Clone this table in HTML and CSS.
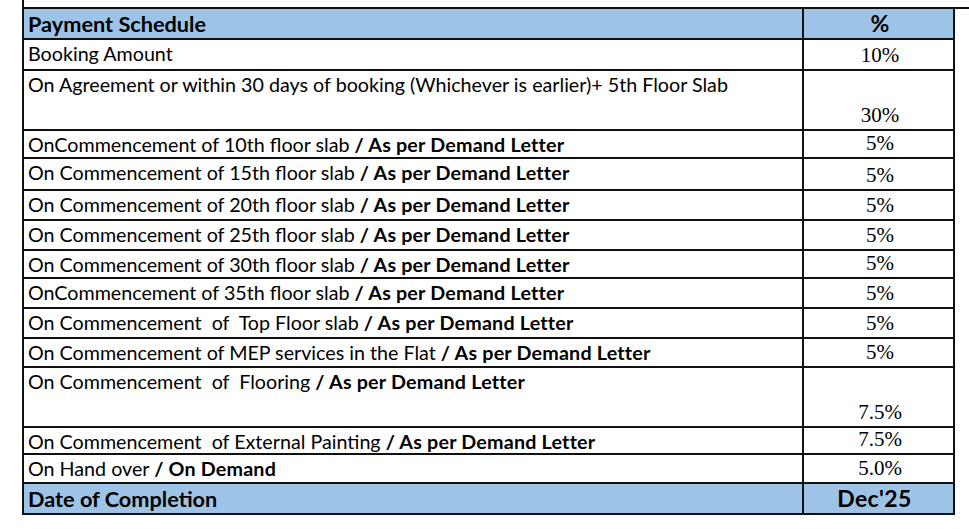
FILE: index.html
```html
<!DOCTYPE html>
<html lang="en">
<head>
<meta charset="utf-8">
<title>Payment Schedule</title>
<link rel="stylesheet" href="styles.css">
</head>
<body>
<div class="sheet">
  <div class="above"></div>
  <div class="grid">
    <div class="c l head"><b>Payment Schedule</b></div>
    <div class="c r head hc"><b>%</b></div>

    <div class="c l">Booking Amount</div>
    <div class="c r">10%</div>

    <div class="c l">On Agreement or within 30 days of booking (Whichever is earlier)+ 5th Floor Slab</div>
    <div class="c r">30%</div>

    <div class="c l">OnCommencement of 10th floor slab <b>/ As per Demand Letter</b></div>
    <div class="c r">5%</div>

    <div class="c l">On Commencement of 15th floor slab <b>/ As per Demand Letter</b></div>
    <div class="c r">5%</div>

    <div class="c l">On Commencement of 20th floor slab <b>/ As per Demand Letter</b></div>
    <div class="c r">5%</div>

    <div class="c l">On Commencement of 25th floor slab <b>/ As per Demand Letter</b></div>
    <div class="c r">5%</div>

    <div class="c l">On Commencement of 30th floor slab <b>/ As per Demand Letter</b></div>
    <div class="c r">5%</div>

    <div class="c l">OnCommencement of 35th floor slab <b>/ As per Demand Letter</b></div>
    <div class="c r">5%</div>

    <div class="c l">On Commencement  of  Top Floor slab <b>/ As per Demand Letter</b></div>
    <div class="c r">5%</div>

    <div class="c l">On Commencement of MEP services in the Flat <b>/ As per Demand Letter</b></div>
    <div class="c r">5%</div>

    <div class="c l">On Commencement  of  Flooring <b>/ As per Demand Letter</b></div>
    <div class="c r">7.5%</div>

    <div class="c l">On Commencement  of External Painting <b>/ As per Demand Letter</b></div>
    <div class="c r">7.5%</div>

    <div class="c l">On Hand over <b>/ On Demand</b></div>
    <div class="c r">5.0%</div>

    <div class="c l head"><b>Date of Completion</b></div>
    <div class="c r head hc dec"><b>Dec'25</b></div>
  </div>
</div>
</body>
</html>
```

FILE: styles.css
```css
html, body {
  margin: 0;
  padding: 0;
  background: #ffffff;
}

.sheet {
  padding-left: 22px;
}

.above {
  height: 7px;
  border-left: 2px solid #111;
  border-bottom: 2px solid #111;
}

.grid {
  display: grid;
  width: 933px;
  box-sizing: border-box;
  grid-template-columns: 778px 149px;
  grid-template-rows: 29px 29px 58px 26px 30px 28px 28px 26px 28px 28px 27px 58px 25px 27px 29px;
  gap: 2px;
  padding: 0 2px 2px 2px;
  background: #111;
}

.c {
  background: #ffffff;
  color: #000;
  overflow: hidden;
}

.l {
  font-family: Lato, "Open Sans", sans-serif;
  font-size: 19.7px;
  line-height: 28px;
  padding-left: 4px;
  white-space: pre;
}

.l b {
  font-weight: 700;
  letter-spacing: 0.2px;
}

.r {
  display: flex;
  align-items: flex-end;
  justify-content: center;
  font-family: "Liberation Serif", "Times New Roman", serif;
  font-size: 21px;
  line-height: 28px;
  padding-left: 3px;
}

.head {
  background: #9dc3e6;
  line-height: 30px;
}

.l.head {
  font-size: 21.7px;
}

.l.head b {
  letter-spacing: 0;
}

.hc {
  font-family: Lato, "Open Sans", sans-serif;
  font-size: 23px;
  align-items: center;
  line-height: 29px;
}

.dec {
  padding-left: 0;
  padding-right: 8px;
  letter-spacing: 0.4px;
}
```
